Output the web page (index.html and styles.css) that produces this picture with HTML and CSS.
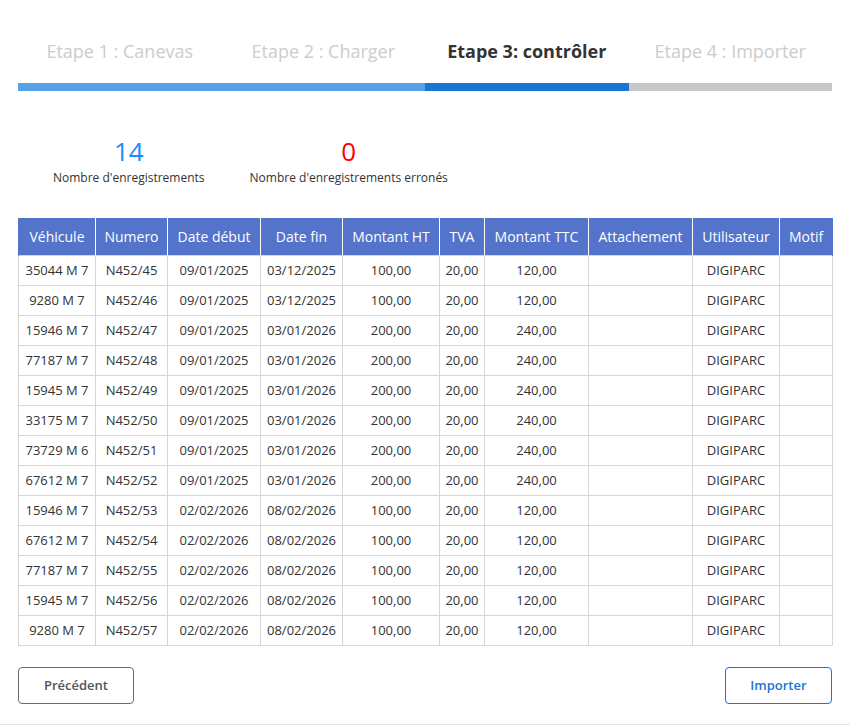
FILE: index.html
```html
<!DOCTYPE html>
<html lang="fr">
<head>
<meta charset="utf-8">
<title>Import</title>
<link rel="stylesheet" href="styles.css">
</head>
<body>
<div class="page">
  <div class="stepper">
    <div class="step done"><div class="step-label">Etape 1 : Canevas</div><div class="step-bar"></div></div>
    <div class="step done"><div class="step-label">Etape 2 : Charger</div><div class="step-bar"></div></div>
    <div class="step active"><div class="step-label">Etape 3: contrôler</div><div class="step-bar"></div></div>
    <div class="step todo"><div class="step-label">Etape 4 : Importer</div><div class="step-bar"></div></div>
  </div>

  <div class="stats">
    <div class="stat stat-total"><div class="stat-num">14</div><div class="stat-label">Nombre d'enregistrements</div></div>
    <div class="stat stat-error"><div class="stat-num">0</div><div class="stat-label">Nombre d'enregistrements erronés</div></div>
  </div>

  <table class="grid">
    <colgroup>
      <col style="width:77px"><col style="width:72px"><col style="width:93px"><col style="width:82px"><col style="width:97px"><col style="width:45px"><col style="width:104px"><col style="width:104px"><col style="width:87px"><col style="width:53px">
    </colgroup>
    <thead>
      <tr><th>Véhicule</th><th>Numero</th><th>Date début</th><th>Date fin</th><th>Montant HT</th><th>TVA</th><th>Montant TTC</th><th>Attachement</th><th>Utilisateur</th><th>Motif</th></tr>
    </thead>
    <tbody>
      <tr><td>35044 M 7</td><td>N452/45</td><td>09/01/2025</td><td>03/12/2025</td><td>100,00</td><td>20,00</td><td>120,00</td><td></td><td>DIGIPARC</td><td></td></tr>
      <tr><td>9280 M 7</td><td>N452/46</td><td>09/01/2025</td><td>03/12/2025</td><td>100,00</td><td>20,00</td><td>120,00</td><td></td><td>DIGIPARC</td><td></td></tr>
      <tr><td>15946 M 7</td><td>N452/47</td><td>09/01/2025</td><td>03/01/2026</td><td>200,00</td><td>20,00</td><td>240,00</td><td></td><td>DIGIPARC</td><td></td></tr>
      <tr><td>77187 M 7</td><td>N452/48</td><td>09/01/2025</td><td>03/01/2026</td><td>200,00</td><td>20,00</td><td>240,00</td><td></td><td>DIGIPARC</td><td></td></tr>
      <tr><td>15945 M 7</td><td>N452/49</td><td>09/01/2025</td><td>03/01/2026</td><td>200,00</td><td>20,00</td><td>240,00</td><td></td><td>DIGIPARC</td><td></td></tr>
      <tr><td>33175 M 7</td><td>N452/50</td><td>09/01/2025</td><td>03/01/2026</td><td>200,00</td><td>20,00</td><td>240,00</td><td></td><td>DIGIPARC</td><td></td></tr>
      <tr><td>73729 M 6</td><td>N452/51</td><td>09/01/2025</td><td>03/01/2026</td><td>200,00</td><td>20,00</td><td>240,00</td><td></td><td>DIGIPARC</td><td></td></tr>
      <tr><td>67612 M 7</td><td>N452/52</td><td>09/01/2025</td><td>03/01/2026</td><td>200,00</td><td>20,00</td><td>240,00</td><td></td><td>DIGIPARC</td><td></td></tr>
      <tr><td>15946 M 7</td><td>N452/53</td><td>02/02/2026</td><td>08/02/2026</td><td>100,00</td><td>20,00</td><td>120,00</td><td></td><td>DIGIPARC</td><td></td></tr>
      <tr><td>67612 M 7</td><td>N452/54</td><td>02/02/2026</td><td>08/02/2026</td><td>100,00</td><td>20,00</td><td>120,00</td><td></td><td>DIGIPARC</td><td></td></tr>
      <tr><td>77187 M 7</td><td>N452/55</td><td>02/02/2026</td><td>08/02/2026</td><td>100,00</td><td>20,00</td><td>120,00</td><td></td><td>DIGIPARC</td><td></td></tr>
      <tr><td>15945 M 7</td><td>N452/56</td><td>02/02/2026</td><td>08/02/2026</td><td>100,00</td><td>20,00</td><td>120,00</td><td></td><td>DIGIPARC</td><td></td></tr>
      <tr><td>9280 M 7</td><td>N452/57</td><td>02/02/2026</td><td>08/02/2026</td><td>100,00</td><td>20,00</td><td>120,00</td><td></td><td>DIGIPARC</td><td></td></tr>
    </tbody>
  </table>

  <div class="actions">
    <button class="btn btn-prev">Précédent</button>
    <button class="btn btn-import">Importer</button>
  </div>
</div>
<div class="footer-line"></div>
</body>
</html>
```
FILE: styles.css
```css
* { box-sizing: border-box; }
html, body { margin: 0; padding: 0; background: #fff; }
body {
  font-family: "Open Sans", "Liberation Sans", sans-serif;
  color: #333;
}
.page { padding: 0 18px; }

.stepper {
  display: grid;
  grid-template-columns: repeat(4, 1fr);
  padding-top: 39px;
}
.step-label {
  text-align: center;
  font-size: 18px;
  line-height: 24px;
  color: #cccccc;
  margin-bottom: 20px;
}
.step.active .step-label { color: #333; font-weight: 700; }
.step-bar { height: 8px; }
.step.done .step-bar { background: #55a2e6; }
.step.active .step-bar { background: #1976d2; }
.step.todo .step-bar { background: #c8c8c8; }

.stats {
  display: flex;
  margin-top: 44px;
  padding-left: 35px;
  gap: 45px;
}
.stat { text-align: center; }
.stat-num { font-size: 26px; line-height: 32px; }
.stat-label { font-size: 12px; line-height: 16px; margin-top: 3px; color: #333; }
.stat-total .stat-num { color: #1a8cff; }
.stat-error .stat-num { color: #ff0000; }

.grid {
  margin-top: 32px;
  width: 814px;
  table-layout: fixed;
  border-collapse: collapse;
}
.grid th {
  background: #5473cb;
  color: #fff;
  font-weight: 400;
  font-size: 14px;
  height: 37px;
  padding: 0;
  border-left: 1px solid #fff;
  border-right: 1px solid #fff;
  text-align: center;
}
.grid th:first-child { border-left: 1px solid #5473cb; }
.grid th:last-child { border-right: 1px solid #5473cb; }
.grid td {
  height: 30px;
  padding: 0;
  font-size: 13px;
  color: #333;
  text-align: center;
  border: 1px solid #d6d6d6;
}

.actions {
  display: flex;
  justify-content: space-between;
  margin-top: 21px;
}
.btn {
  font-family: "Open Sans", "Liberation Sans", sans-serif;
  font-size: 13px;
  font-weight: 600;
  height: 37px;
  background: #fff;
  border-radius: 4px;
  cursor: pointer;
}
.btn-prev { width: 116px; border: 1px solid #6b6b6b; color: #555; }
.btn-import { width: 107px; border: 1px solid #1976d2; color: #1976d2; }

.footer-line {
  margin-top: 20px;
  border-top: 1px solid #e3e3e3;
}
```
